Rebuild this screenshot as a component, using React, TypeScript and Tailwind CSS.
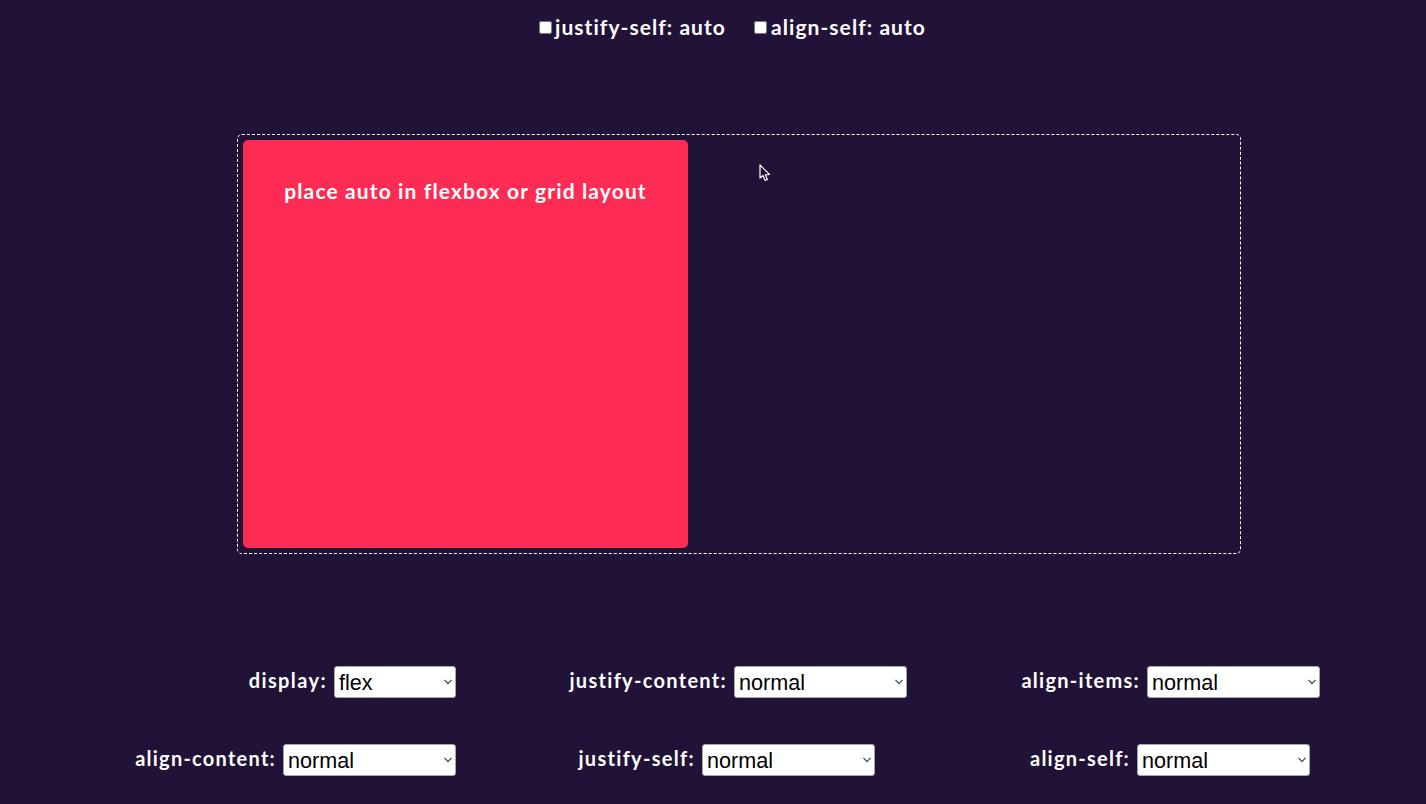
import React from "react";

const hand = "font-['Lato',_'Open_Sans',_sans-serif] font-bold";

function Field({ label, value, cell, sel, track }: { label: string; value: string; cell: string; sel: string; track: string }) {
  return (
    <div className={`flex items-center justify-end shrink-0 ${cell}`}>
      <label className={`${hand} text-white text-[20px] leading-none mr-[7px] -mt-[4px] ${track}`}>{label}</label>
      <div className={`relative h-[32px] ${sel}`}>
        <select
          defaultValue={value}
          className="appearance-none block w-full h-full bg-white text-black rounded-[3px] border border-[#a5a5ad] pl-[4px] pt-[2px] text-[21.6px] leading-none font-['Liberation_Sans',_Arial,_sans-serif] outline-none"
        >
          <option value={value}>{value}</option>
        </select>
        <svg className="absolute right-[3px] top-[12px] pointer-events-none" width="10" height="8" viewBox="0 0 10 8" fill="none">
          <path d="M1.5 1.8 L5 5.6 L8.5 1.8" stroke="#444" strokeWidth="1.2" />
        </svg>
      </div>
    </div>
  );
}

export default function App() {
  return (
    <div className="relative h-[804px] w-[1426px] overflow-hidden bg-[#211338]">
      <div className="flex h-[56px] items-center pl-[539px]">
        <label className="flex w-[215px] items-center">
          <input type="checkbox" className="m-0 h-[13px] w-[13px] -mt-[1px] mr-[3px]" />
          <span className={`${hand} text-white text-[21px] leading-none -mt-[4px] tracking-[1.05px]`}>justify-self: auto</span>
        </label>
        <label className="flex items-center">
          <input type="checkbox" className="m-0 h-[13px] w-[13px] -mt-[1px] mr-[4px]" />
          <span className={`${hand} text-white text-[21px] leading-none -mt-[4px] tracking-[1.06px]`}>align-self: auto</span>
        </label>
      </div>

      <div className="ml-[237px] mt-[78px] h-[420px] w-[1004px] rounded-[5px] border border-dashed border-white p-[5px]">
        <div className="h-[408px] w-[445px] rounded-[5px] bg-[#fe2c55] pt-[37px] text-center">
          <span className={`${hand} text-white text-[21px] leading-[28px] tracking-[1.13px]`}>place auto in flexbox or grid layout</span>
        </div>
      </div>

      <div className="mt-[112px] flex">
        <Field label="display:" value="flex" cell="w-[456px]" sel="w-[122px]" track="tracking-[1.4px]" />
        <Field label="justify-content:" value="normal" cell="w-[451px]" sel="w-[173px]" track="tracking-[1.3px]" />
        <Field label="align-items:" value="normal" cell="w-[413px]" sel="w-[173px]" track="tracking-[1.27px]" />
      </div>
      <div className="mt-[46px] flex">
        <Field label="align-content:" value="normal" cell="w-[456px]" sel="w-[173px]" track="tracking-[1.25px]" />
        <Field label="justify-self:" value="normal" cell="w-[419px]" sel="w-[173px]" track="tracking-[1.3px]" />
        <Field label="align-self:" value="normal" cell="w-[435px]" sel="w-[173px]" track="tracking-[1.25px]" />
      </div>

      <svg className="absolute left-[759px] top-[164px]" width="13" height="19" viewBox="0 0 13 19" fill="none">
        <path d="M1 1 L1 14 L4 11.5 L6.2 16.5 L8.4 15.5 L6.3 10.8 L10.5 10.5 Z" fill="#211338" stroke="#fff" strokeWidth="1.2" strokeLinejoin="round" />
      </svg>
    </div>
  );
}
